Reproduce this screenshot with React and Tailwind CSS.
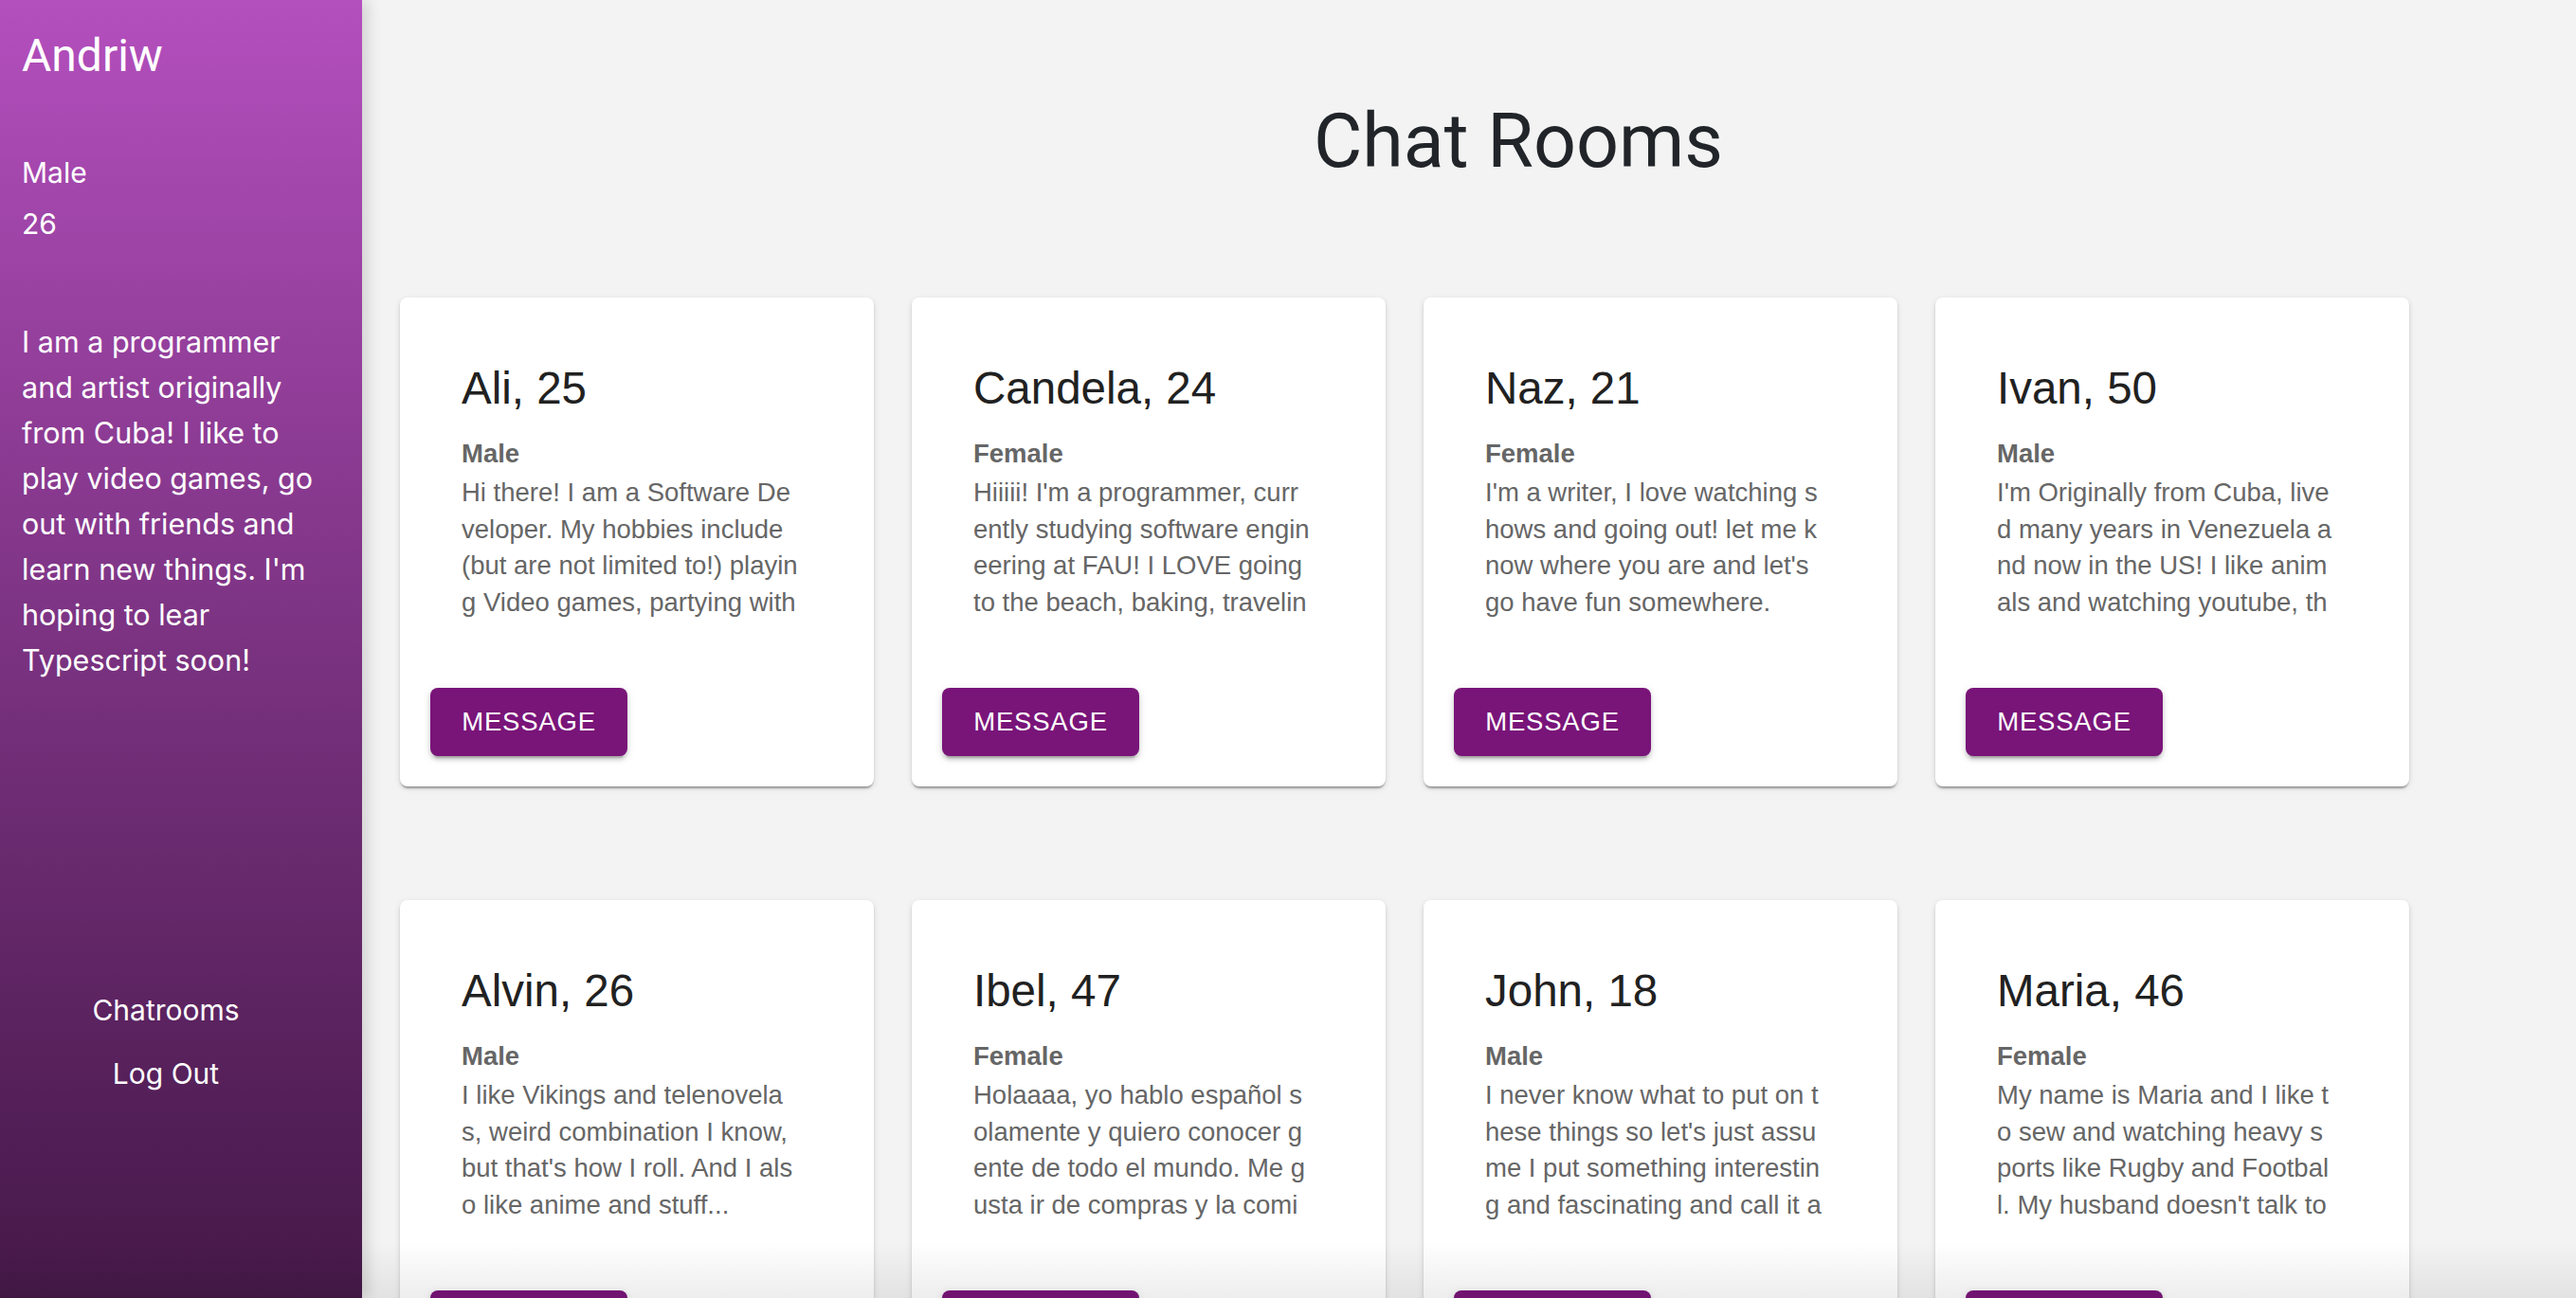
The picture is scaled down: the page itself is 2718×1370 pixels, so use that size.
const rooms = [
  {
    name: 'Ali, 25',
    gender: 'Male',
    bio: 'Hi there! I am a Software Developer. My hobbies include (but are not limited to!) playing Video games, partying with friends and learning new things every day.',
  },
  {
    name: 'Candela, 24',
    gender: 'Female',
    bio: "Hiiiii! I'm a programmer, currently studying software engineering at FAU! I LOVE going to the beach, baking, traveling and meeting new people.",
  },
  {
    name: 'Naz, 21',
    gender: 'Female',
    bio: "I'm a writer, I love watching shows and going out! let me know where you are and let's go have fun somewhere.",
  },
  {
    name: 'Ivan, 50',
    gender: 'Male',
    bio: "I'm Originally from Cuba, lived many years in Venezuela and now in the US! I like animals and watching youtube, that's about it.",
  },
  {
    name: 'Alvin, 26',
    gender: 'Male',
    bio: "I like Vikings and telenovelas, weird combination I know, but that's how I roll. And I also like anime and stuff...",
  },
  {
    name: 'Ibel, 47',
    gender: 'Female',
    bio: 'Holaaaa, yo hablo español solamente y quiero conocer gente de todo el mundo. Me gusta ir de compras y la comida italiana.',
  },
  {
    name: 'John, 18',
    gender: 'Male',
    bio: "I never know what to put on these things so let's just assume I put something interesting and fascinating and call it a day.",
  },
  {
    name: 'Maria, 46',
    gender: 'Female',
    bio: "My name is Maria and I like to sew and watching heavy sports like Rugby and Football. My husband doesn't talk to me during the games.",
  },
];

// bio lines as they wrap in the sidebar
const aboutLines = [
  'I am a programmer',
  'and artist originally',
  'from Cuba! I like to',
  'play video games, go',
  'out with friends and',
  "learn new things. I'm",
  'hoping to lear',
  'Typescript soon!',
];

function RoomCard({ room }) {
  return (
    <div className="flex h-[516px] w-[500px] flex-col rounded-[8px] bg-white shadow-[0_4px_2px_-2px_rgba(0,0,0,0.2),0_2px_2px_0_rgba(0,0,0,0.14),0_2px_6px_0_rgba(0,0,0,0.12)] font-['Liberation_Sans',Arial,sans-serif]">
      <div className="px-[65px] pt-[64px]">
        <h2 className="text-[47.5px] leading-[63px] text-[#212121]">{room.name}</h2>
        <p className="mt-[14px] text-[27.5px] font-bold leading-[48px] text-[#666]">{room.gender}</p>
        <p className="-mt-[2px] h-[154px] w-[356px] overflow-hidden break-all text-[27.5px] leading-[38.5px] text-[#666]">
          {room.bio}
        </p>
      </div>
      <div className="mt-auto pb-[32px] pl-[32px]">
        <button className="flex h-[72px] w-[208px] items-center justify-center rounded-[8px] bg-[#791479] text-[27.5px] uppercase tracking-[0.8px] text-white shadow-[0_6px_2px_-4px_rgba(0,0,0,0.2),0_4px_4px_0_rgba(0,0,0,0.14),0_2px_10px_0_rgba(0,0,0,0.12)]">
          Message
        </button>
      </div>
    </div>
  );
}

export default function App() {
  return (
    <div className="relative flex h-screen overflow-hidden bg-[#f3f3f3]">
      {/* Profile sidebar */}
      <aside className="relative z-10 flex w-[382px] shrink-0 flex-col bg-linear-to-b from-[#b44fbe] to-[#451848] text-white shadow-[6px_0_14px_rgba(0,0,0,0.14)]">
        <div className="pl-[23px] pt-[31px]">
          <h1 className="font-['Roboto',sans-serif] text-[48px] leading-[56px]">Andriw</h1>
          <div className="mt-[68px] font-['Inter',sans-serif] text-[30px] leading-[54px]">
            <p>Male</p>
            <p>26</p>
          </div>
          <p className="mt-[74px] font-['Inter',sans-serif] text-[30.5px] leading-[48px]">
            {aboutLines.map((line) => (
              <span key={line} className="block whitespace-nowrap">
                {line}
              </span>
            ))}
          </p>
        </div>
        <nav className="mt-[312px] flex w-[350px] flex-col items-center font-['Inter',sans-serif] text-[30px] leading-[67px]">
          <a>Chatrooms</a>
          <a>Log Out</a>
        </nav>
      </aside>

      {/* Rooms */}
      <main className="flex-1">
        <h1 className="pl-[104px] pt-[102px] text-center font-['Roboto',sans-serif] text-[79px] leading-[95px] text-[#212529]">
          Chat Rooms
        </h1>
        <div className="mt-[117px] grid grid-cols-[repeat(4,500px)] gap-x-[40px] gap-y-[120px] pl-[40px]">
          {rooms.map((room) => (
            <RoomCard key={room.name} room={room} />
          ))}
        </div>
      </main>

      <div className="pointer-events-none absolute inset-x-0 bottom-0 z-20 h-[60px] bg-linear-to-b from-black/0 to-black/[0.07]" />
    </div>
  );
}
